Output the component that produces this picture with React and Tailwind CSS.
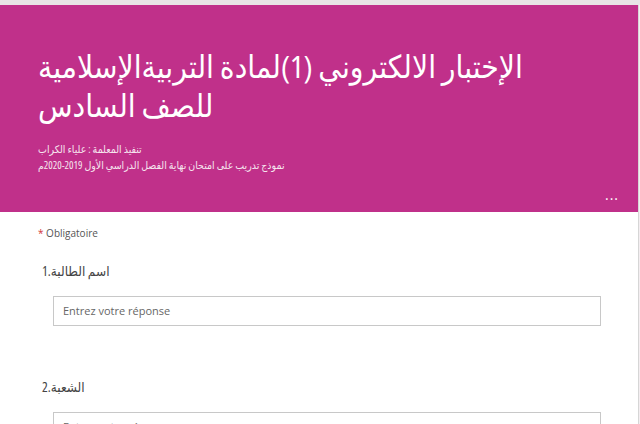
import React from "react";

const font = { fontFamily: '"Segoe UI", "Open Sans", "DejaVu Sans", sans-serif' };

const Question = ({ num, label }) => (
    <div className="mb-[50px]">
        <div className="pl-[4px] text-[13.5px] leading-[22px] text-[#444] font-stretch-condensed">
            <span>{num}.</span>
            <span>{label}</span>
        </div>
        <div className="mt-[14px] ml-[15px] w-[548px] h-[30px] border border-[#c8c8c8] bg-white flex items-center px-[9px] text-[11px] text-[#666]">
            Entrez votre réponse
        </div>
    </div>
);

const App = () => {
    return (
        <div className="w-[640px] h-[424px] overflow-hidden bg-[#f4eef1]" style={font}>
            <div className="h-[5px] bg-[#e8e4e6]" />
            <div className="w-[639px] h-[419px] bg-white border-r border-[#d6d6d6]">
                <div className="relative h-[207px] bg-[#c0308a] text-white pl-[38px] pt-[41px]">
                    <h1 className="text-[31.5px] leading-[39px] font-normal text-left font-stretch-condensed">
                        الإختبار الالكتروني (1)لمادة التربيةالإسلامية <br />
                        للصف السادس
                    </h1>
                    <div className="mt-[17px] text-[10.5px] leading-[16px] text-[#f6e6ef] font-stretch-condensed">
                        <p>تنفيذ المعلمة : علياء الكراب</p>
                        <p>نموذج تدريب على امتحان نهاية الفصل الدراسي الأول 2019-2020م</p>
                    </div>
                    <div className="absolute right-[19px] bottom-[10px] text-[14px] leading-none tracking-[1px]">...</div>
                </div>
                <div className="pl-[38px] pt-[14px]">
                    <div className="text-[10px] leading-[14px] text-[#555]">
                        <span className="text-[#d13438]">*</span> Obligatoire
                    </div>
                    <div className="mt-[20px]">
                        <Question num="1" label="اسم الطالبة" />
                        <Question num="2" label="الشعبة" />
                    </div>
                </div>
            </div>
        </div>
    );
};

export default App;
